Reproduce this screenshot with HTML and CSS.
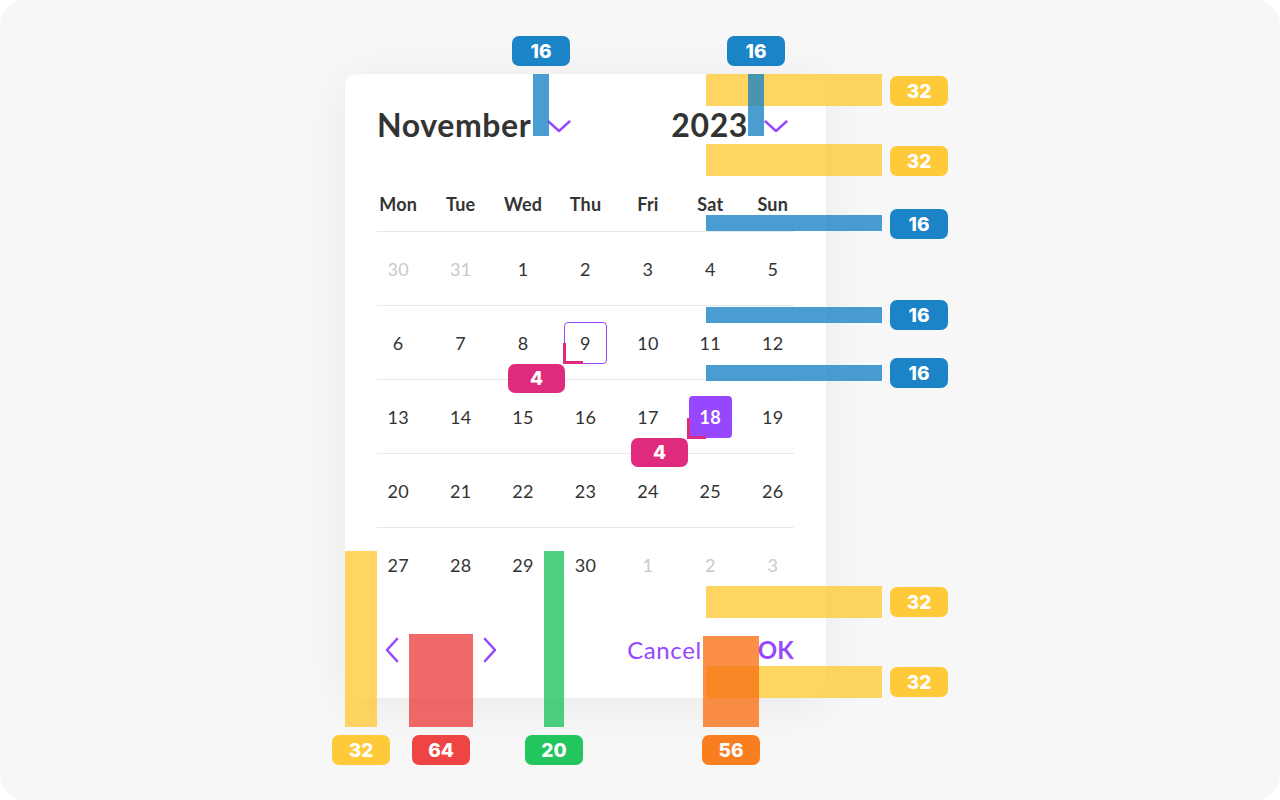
FILE: index.html
```html
<!DOCTYPE html>
<html lang="en">
<head>
    <meta charset="UTF-8">
    <meta name="viewport" content="width=device-width, initial-scale=1.0">
    <title>Date picker spacing</title>
    <link rel="stylesheet" href="styles.css">
</head>
<body>
    <div class="frame">
        <div class="card">
            <div class="header">
                <div class="picker">
                    <span>November</span>
                    <svg class="caret" viewBox="0 0 24 24"><path d="M1.5 7.5l10.5 9.5 10.5-9.5"/></svg>
                </div>
                <div class="picker year">
                    <span>2023</span>
                    <svg class="caret" viewBox="0 0 24 24"><path d="M1.5 7.5l10.5 9.5 10.5-9.5"/></svg>
                </div>
            </div>

            <div class="weekdays">
                <span>Mon</span><span>Tue</span><span>Wed</span><span>Thu</span><span>Fri</span><span>Sat</span><span>Sun</span>
            </div>

            <div class="week">
                <span class="day muted">30</span><span class="day muted">31</span><span class="day">1</span><span class="day">2</span><span class="day">3</span><span class="day">4</span><span class="day">5</span>
            </div>
            <div class="week">
                <span class="day">6</span><span class="day">7</span><span class="day">8</span><span class="day today">9</span><span class="day">10</span><span class="day">11</span><span class="day">12</span>
            </div>
            <div class="week">
                <span class="day">13</span><span class="day">14</span><span class="day">15</span><span class="day">16</span><span class="day">17</span><span class="day selected">18</span><span class="day">19</span>
            </div>
            <div class="week">
                <span class="day">20</span><span class="day">21</span><span class="day">22</span><span class="day">23</span><span class="day">24</span><span class="day">25</span><span class="day">26</span>
            </div>
            <div class="week last">
                <span class="day">27</span><span class="day">28</span><span class="day">29</span><span class="day">30</span><span class="day muted">1</span><span class="day muted">2</span><span class="day muted">3</span>
            </div>

            <div class="footer">
                <div class="nav">
                    <button class="arrow"><svg viewBox="0 0 32 32"><path d="M20 5L10 16l10 11"/></svg></button>
                    <button class="arrow"><svg viewBox="0 0 32 32"><path d="M12 5l10 11-10 11"/></svg></button>
                </div>
                <div class="actions">
                    <button class="btn">Cancel</button>
                    <button class="btn ok">OK</button>
                </div>
            </div>
        </div>

        <!-- spacing redlines -->
        <div class="notes">
            <div class="band yellow y-top"></div>
            <div class="band yellow y-head"></div>
            <div class="band yellow y-foot"></div>
            <div class="band yellow y-bottom"></div>
            <div class="band yellow y-left"></div>
            <div class="band blue b-week"></div>
            <div class="band blue b-row1"></div>
            <div class="band blue b-row2"></div>
            <div class="band blue b-month"></div>
            <div class="band blue b-year"></div>
            <div class="band red r-nav"></div>
            <div class="band green g-col"></div>
            <div class="band orange o-btn"></div>
            <div class="corner c-today"></div>
            <div class="corner c-sel"></div>

            <div class="tag blue t-month">16</div>
            <div class="tag blue t-year">16</div>
            <div class="tag yellow t-top">32</div>
            <div class="tag yellow t-head">32</div>
            <div class="tag blue t-week">16</div>
            <div class="tag blue t-row1">16</div>
            <div class="tag blue t-row2">16</div>
            <div class="tag yellow t-foot">32</div>
            <div class="tag yellow t-bottom">32</div>
            <div class="tag yellow t-left">32</div>
            <div class="tag red t-nav">64</div>
            <div class="tag green t-col">20</div>
            <div class="tag orange t-btn">56</div>
            <div class="tag pink t-today">4</div>
            <div class="tag pink t-sel">4</div>
        </div>
    </div>
</body>
</html>
```

FILE: styles.css
```css
body {
    margin: 0;
    background: #ffffff;
    font-family: Lato, "Noto Sans", sans-serif;
    color: #333333;
}
.frame {
    position: relative;
    width: 1280px;
    height: 800px;
    box-sizing: border-box;
    padding: 74px 0 0 345px;
    background: #f7f7f7;
    border-radius: 24px;
    overflow: hidden;
}
.card {
    width: 481px;
    height: 624px;
    box-sizing: border-box;
    padding: 32px;
    background: #ffffff;
    border-radius: 12px;
    box-shadow: 0 6px 48px rgba(0, 0, 0, 0.06);
    display: flex;
    flex-direction: column;
}
.header {
    height: 38px;
    margin-bottom: 32px;
    display: flex;
    justify-content: space-between;
    align-items: center;
}
.picker {
    display: flex;
    align-items: center;
    gap: 16px;
    font-size: 32px;
    font-weight: 700;
    line-height: 38px;
    letter-spacing: 0.6px;
}
.picker.year {
    margin-right: 6px;
}
.caret {
    width: 24px;
    height: 24px;
    margin-top: 2px;
    fill: none;
    stroke: #9747ff;
    stroke-width: 2.4;
    stroke-linecap: round;
    stroke-linejoin: round;
}
.weekdays, .week {
    display: grid;
    grid-template-columns: repeat(7, 1fr);
    column-gap: 20px;
    padding: 16px 0 15px;
    border-bottom: 1px solid #e9e9e9;
    text-align: center;
}
.weekdays {
    font-size: 18px;
    font-weight: 700;
    line-height: 24px;
    letter-spacing: 0.2px;
}
.week.last {
    padding-bottom: 0;
    border-bottom: none;
}
.day {
    height: 42px;
    box-sizing: border-box;
    display: flex;
    align-items: center;
    justify-content: center;
    font-size: 18px;
    letter-spacing: 0.3px;
    border-radius: 4px;
}
.day.muted {
    color: #c9c9c9;
}
.day.today {
    border: 1.5px solid #9747ff;
}
.day.selected {
    background: #9747ff;
    color: #ffffff;
    font-weight: 700;
}
.footer {
    margin-top: 32px;
    height: 48px;
    display: flex;
    justify-content: space-between;
    align-items: flex-end;
}
.nav {
    display: flex;
    gap: 64px;
}
.arrow {
    width: 32px;
    height: 32px;
    padding: 0;
    border: none;
    background: none;
    display: block;
}
.arrow svg {
    display: block;
    width: 32px;
    height: 32px;
    fill: none;
    stroke: #9747ff;
    stroke-width: 2.6;
    stroke-linecap: round;
    stroke-linejoin: round;
}
.actions {
    display: flex;
    gap: 56px;
}
.btn {
    height: 32px;
    padding: 0;
    border: none;
    background: none;
    font-family: Lato, "Noto Sans", sans-serif;
    font-size: 24px;
    line-height: 32px;
    letter-spacing: 0.6px;
    color: #9747ff;
}
.btn.ok {
    font-weight: 700;
    letter-spacing: 0.2px;
}

/* redline overlay */
.notes {
    position: absolute;
    inset: 0;
    pointer-events: none;
}
.band, .tag, .corner {
    position: absolute;
}
.band.yellow { background: rgba(255, 202, 58, 0.8); }
.band.blue { background: rgba(27, 132, 198, 0.8); }
.band.red { background: rgba(239, 68, 68, 0.8); }
.band.green { background: rgba(34, 197, 94, 0.8); }
.band.orange { background: rgba(249, 115, 22, 0.8); }

.y-top { left: 706px; top: 74px; width: 176px; height: 32px; }
.y-head { left: 706px; top: 144px; width: 176px; height: 32px; }
.y-foot { left: 706px; top: 586px; width: 176px; height: 32px; }
.y-bottom { left: 706px; top: 666px; width: 176px; height: 32px; }
.y-left { left: 345px; top: 551px; width: 32px; height: 176px; }
.b-week { left: 706px; top: 215px; width: 176px; height: 16px; }
.b-row1 { left: 706px; top: 307px; width: 176px; height: 16px; }
.b-row2 { left: 706px; top: 365px; width: 176px; height: 16px; }
.b-month { left: 533px; top: 74px; width: 16px; height: 62px; }
.b-year { left: 748px; top: 74px; width: 16px; height: 62px; }
.r-nav { left: 409px; top: 634px; width: 64px; height: 93px; }
.g-col { left: 544px; top: 551px; width: 20px; height: 176px; }
.o-btn { left: 703px; top: 636px; width: 56px; height: 91px; }

.corner {
    box-sizing: border-box;
    border-left: 3px solid #e02a7d;
    border-bottom: 3px solid #e02a7d;
}
.c-today { left: 563px; top: 343px; width: 20px; height: 21px; }
.c-sel { left: 687px; top: 418px; width: 19px; height: 21px; }

.tag {
    width: 58px;
    height: 30px;
    border-radius: 7px;
    display: flex;
    align-items: center;
    justify-content: center;
    font-family: Inter, "Open Sans", sans-serif;
    font-size: 19px;
    font-weight: 800;
    color: #ffffff;
}
.tag.yellow { background: #ffca3a; }
.tag.blue { background: #1b84c6; }
.tag.red { background: #ef4444; }
.tag.green { background: #22c55e; }
.tag.orange { background: #f97e1f; }
.tag.pink { background: #e02a7d; width: 57px; height: 29px; }

.t-month { left: 512px; top: 36px; }
.t-year { left: 727px; top: 36px; }
.t-top { left: 890px; top: 76px; }
.t-head { left: 890px; top: 146px; }
.t-week { left: 890px; top: 209px; }
.t-row1 { left: 890px; top: 300px; }
.t-row2 { left: 890px; top: 358px; }
.t-foot { left: 890px; top: 587px; }
.t-bottom { left: 890px; top: 667px; }
.t-left { left: 332px; top: 735px; }
.t-nav { left: 412px; top: 735px; }
.t-col { left: 525px; top: 735px; }
.t-btn { left: 702px; top: 735px; }
.t-today { left: 508px; top: 364px; }
.t-sel { left: 631px; top: 438px; }
```
